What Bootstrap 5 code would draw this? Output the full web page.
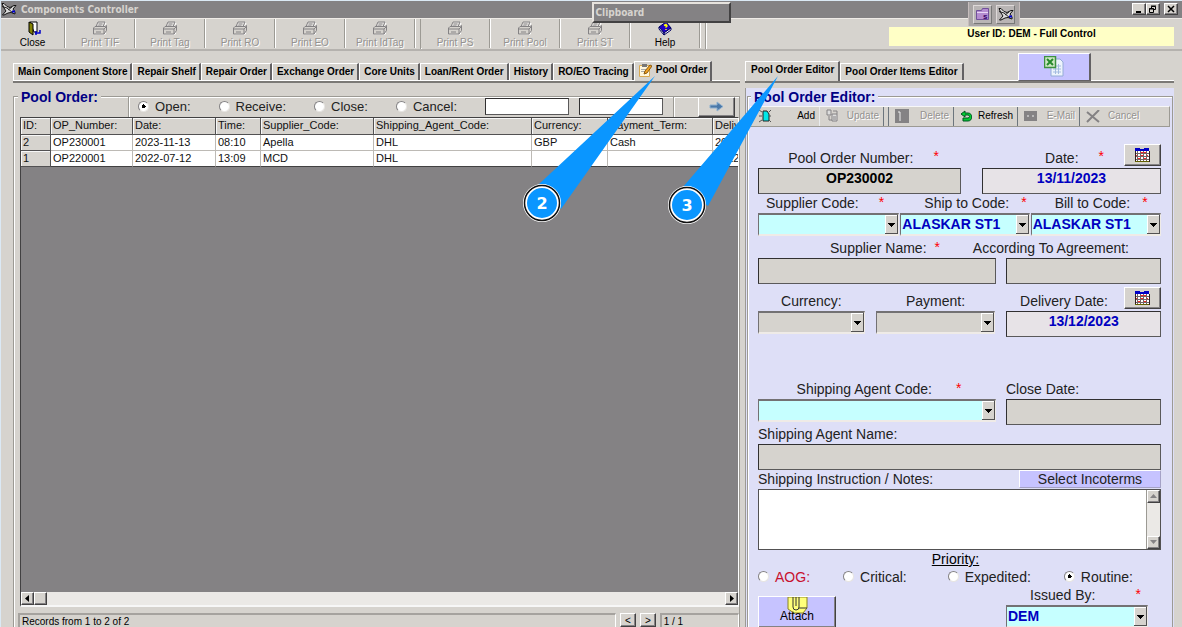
<!DOCTYPE html>
<html lang="en">
<head>
<meta charset="utf-8">
<meta name="viewport" content="width=device-width, initial-scale=1">
<title>Components Controller</title>
<link href="https://cdn.jsdelivr.net/npm/bootstrap@5.3.0/dist/css/bootstrap.min.css" rel="stylesheet">
<script src="https://cdn.jsdelivr.net/npm/bootstrap@5.3.0/dist/js/bootstrap.bundle.min.js"></script>
<style>
:root{--face:#d6d3ce;--dark:#848284;--panel:#dedff7;--cyan:#c6ffff;--lilac:#c6c3ff;--ink:#0000c0}
body{background:var(--face);color:#000;font:14px/18px "Liberation Sans",Arial,sans-serif;overflow:hidden}
button,input,select,textarea{border-radius:0;font:inherit;color:inherit}
button{padding:0;background:var(--face);border:0}
svg{display:block;flex:none}
.app{border-top:1px solid #dbe9f5;border-left:1px solid #dbe9f5}
.titlebar{background:var(--dark);color:var(--face);height:17px;padding:0 4px 0 0;font:bold 10px/15px "DejaVu Sans Condensed","DejaVu Sans",sans-serif}
.raised{border:1px solid;border-color:#fff #424142 #424142 #fff;box-shadow:inset -1px -1px var(--dark);background:var(--face)}
.winbtn{width:14px;height:12px;display:grid;place-items:center}
.toolbar{height:33px;border-bottom:2px solid #b5b2ae;border-top:1px solid #efebe7}
.tool{width:69px;border-right:1px solid #9c9a94;box-shadow:1px 0 #fff;margin-right:1px;font:10px/12px "Liberation Sans",sans-serif;white-space:nowrap;display:flex;flex-direction:column;align-items:center;gap:1px;padding-top:2px;margin-bottom:1px;flex:0 1 auto}
.tool.first{width:64px}
.twin{margin-right:5px}
.bar{width:1px;background:#9c9a94;box-shadow:1px 0 #fff}
.off{color:#949290;text-shadow:1px 1px #fff}
.user{background:#ffffc6;height:19px;width:285px;margin:8px 8px 0 auto;font:bold 10px/13px "Liberation Sans",sans-serif;text-align:center}
.clip{left:50%;top:1px;width:139px;height:21px;padding-left:2px;z-index:4;background:var(--dark);color:var(--face);border:2px solid;border-color:#e7e3de #424142 #424142 #e7e3de;font:bold 10px/17px "DejaVu Sans Condensed","DejaVu Sans",sans-serif}
.tray{right:162px;top:1px;width:52px;height:24px;z-index:4;background:#a9a5a5;border-left:1px solid #c6bdbd;border-right:1px solid #c6bdbd}
.tray button{width:19px;height:19px;background:#b9b5b5;border:1px solid;border-color:#ded9d9 #777 #777 #ded9d9;display:grid;place-items:center}
.halves{display:grid;grid-template-columns:minmax(0,63fr) minmax(0,37fr)}
.lefthalf{padding:0 5px 0 12px}
.righthalf{padding-right:8px}
.tabs{height:32px;align-items:flex-end;border-bottom:2px solid #7b7976;box-shadow:inset 0 -1px #fff;flex:none;flex-wrap:nowrap}
.tabs .tab{height:17px;margin-bottom:1px;padding:0 4px;border:1px solid;border-width:1px 1px 0;border-color:#fff #636163 #fff #fff;border-right-width:2px;font:bold 10px/15px "Liberation Sans",sans-serif;white-space:nowrap;display:flex;align-items:center}
.lefthalf .tab{padding:0 3px 0 4px}
.tabs .tab.active{height:20px;margin-bottom:0;padding-bottom:3px}
.lefthalf .tab.active{padding-left:3px}
.righthalf .tab.active{padding-left:5px}
.excel{width:73px;height:28px;background:var(--lilac);display:grid;place-items:center;margin-left:54px;border:1px solid;border-color:#fff #636163 #636163 #fff;border-right-width:2px}
.group{border:1px solid #9c9a94;border-bottom:0;box-shadow:inset 1px 1px #fff;margin-top:13px}
.grouphead{font:bold 14px/16px "Liberation Sans",sans-serif;color:#000084;background:var(--face);white-space:nowrap;margin:-8px 0 0;padding:0 3px}
input[type=radio]{appearance:none;width:11px;height:11px;border-radius:50%;background:#fff;border:1px solid;border-color:#848284 #e7e5e2 #e7e5e2 #848284;margin:0;flex:none}
input[type=radio]:checked{background:radial-gradient(circle,#000 2px,#fff 2px)}
.filters{height:20px;border-left:1px solid #fff;box-shadow:-1px 0 #9c9a94;font-size:13px}
.filters label{margin:0 28px 0 6px;color:#222}
.filters .find{margin-right:10px}
.box{border:1px solid #424142;border-color:#313031 #5a595a #5a595a #313031;background:#fff;min-width:0;width:100%;padding:0 2px;display:block}
.find{width:84px;height:17px}
.go{width:37px;height:20px;display:grid;place-items:center}
.gridbox{background:var(--dark);margin:0 0 0 6px;border:1px solid #424142;border-right:1px solid #fff;border-bottom:2px solid #f7f7f7;overflow:hidden;min-height:0}
.records{table-layout:fixed;width:780px;border-collapse:separate;border-spacing:0;font:11px/15px "Liberation Sans",sans-serif;white-space:nowrap;color:#111}
.records th,.records td{padding:0 2px;height:16px;border-right:1px solid #bdbab5;border-bottom:1px solid #bdbab5;background:#fff;font-weight:400;overflow:hidden}
.records thead th,.records tbody th{background:var(--face);border-color:#525152;box-shadow:inset 1px 1px #f7f7f7}
.records thead th{height:17px}
.records tr:last-child td{border-bottom-color:#424142}
.track{background:#ebe9e6}
.status{height:14px;margin:6px 0 0 4px;font:10px/13px "Liberation Sans",sans-serif}
.sunk{border:1px solid;border-width:2px 1px 0 2px;border-color:#a5a29e #fff #fff #a5a29e;padding-left:2px}
.pageno{width:11%}
.editor{background:var(--panel);margin-top:5px;padding:8px 1px 0;border-left:1px solid #9c9a94;overflow:hidden}
.editor .group{margin:0;border-color:#9c9a94}
.editor .grouphead{background:var(--panel);width:max-content;margin-left:3px}
.edbar{height:21px;margin:1px 2px 0;background:var(--face);border:1px solid;border-color:#f7f7f7 #9c9a94 #9c9a94 #f7f7f7;font:10px/18px "Liberation Sans",sans-serif;display:grid;grid-template-columns:68fr 64fr 6fr 64fr 64fr 62fr 90fr}
.edbar button{display:flex;align-items:center;justify-content:space-between;min-width:0;padding:0 4px 0 6px}
.form{padding:17px 11px 0 10px}
.fields{display:grid}
.fields>*{min-width:0}
.r1{grid-template-columns:203fr 179fr;column-gap:21px}
.r2{grid-template-columns:141fr 129fr 130fr;column-gap:1px}
.r3{grid-template-columns:238fr 155fr;column-gap:10px}
.r4{grid-template-columns:107fr 120fr 155fr;column-gap:11px}
.near{margin-top:3px}
.far{margin-top:43px}
.cap{display:flex;align-items:center;white-space:nowrap;height:19px;color:#222;gap:20px}
.tall{height:24px;padding-top:4px}
.star{color:#f00;line-height:16px;align-self:flex-start}
.val{height:26px;font-weight:700;text-align:center;padding-bottom:5px}
.grey{background:var(--face)}
.date{background:#e7e3e7;color:var(--ink)}
.pick{appearance:none;width:100%;height:23px;padding:0 1px;line-height:17px;font-weight:700;color:var(--ink);border:2px solid;border-color:#737173 #efebe7 #efebe7 #737173;border-width:2px 1px;background:var(--cyan) url("data:image/svg+xml,%3Csvg xmlns='http://www.w3.org/2000/svg' width='13' height='19' shape-rendering='crispEdges'%3E%3Cpath fill='%23d6d3ce' d='M0 0h13v19H0z'/%3E%3Cpath fill='none' stroke='%23fff' d='M.5 19V.5H13'/%3E%3Cpath fill='none' stroke='%23525152' d='M12.5 0v18.5H0'/%3E%3Cpath d='M3 8h7v1H9v1H8v1H7v1H6v-1H5v-1H4V9H3z'/%3E%3C/svg%3E") right center no-repeat}
.pick.grey{background-color:var(--face)}
.cal{width:37px;height:22px;display:grid;place-items:center;flex:none;align-self:flex-start}
.notes{height:61px;border:1px solid #525152}
.notes textarea{border:0;resize:none;outline:0}
.notes .track{width:14px;border-left:1px solid #9c9a94}
.arrowbtn{width:13px;height:13px;display:grid;place-items:center;flex:none}
.inco{width:142px;height:18px;background:var(--lilac);border:1px solid;border-color:#fff #a5a2c6 #a5a2c6 #fff;line-height:16px;color:#222}
.prio label{margin-left:6px;color:#222}
.prio .aog{color:#c8102e}
.attach{width:78px;height:32px;margin-top:10px;background:var(--lilac);font-size:12px;line-height:12px;display:flex;flex-direction:column;align-items:center}
.attach span{margin-top:-4px}
.issued{width:142px}
.callouts{left:0;top:0;z-index:5;pointer-events:none}
</style>
</head>
<body>
<svg width="0" height="0" class="position-absolute" aria-hidden="true">
  <symbol id="printer" viewBox="0 0 16 14"><g fill="none" stroke="#fff" transform="translate(1 1)"><path d="M4 5.500 6 .5h7l-2 5M1.500 6.500h11v5h-11z"/></g><path d="M4 5 6 .5h7L11 5" fill="#e7e5e2" stroke="#848284"/><path d="M6.500 2.500h4M5.500 4.500h4" stroke="#848284"/><path d="M1.500 6.500 3 5h10l1.500-1v5L12 12.500H1.500z" fill="#d6d3ce" stroke="#848284"/><path d="M1.500 7.500h10.500v5M4 10.500h5M12 7.500l2-2" stroke="#848284" fill="none"/></symbol>
  <symbol id="plane" viewBox="0 0 16 14"><path d="M1 1.500h2l3 3 3 1 4-2h2l-3 3.500 2 3v2l-4-1.500L7 11l-4 2H1.500L5 9 3 6z" fill="#ddd" stroke="#111"/><path d="m1 4.500 5 1.500 6 5M7 8l4-3" stroke="#222" fill="none"/><path d="M11 9.500h3" stroke="#00c" stroke-width="2"/></symbol>
  <symbol id="calendar" viewBox="0 0 15 14"><g shape-rendering="crispEdges"><path d="M0 0h14v13H0z" fill="#fff"/><path d="M0 0h14v3H0z" fill="#0000c6"/><path d="M5 0h4v1H5z" fill="#d6d3ce"/><path d="M0 5.500h14M0 8.500h14M0 11.500h14M2.500 3v10M5.500 3v10M8.500 3v10M11.500 3v10" stroke="#736464"/><path d="M6 4h2v1H6zM9 4h2v1H9zM0 7h2v1H0zM6 7h2v1H6zM12 7h1v1h-1zM3 10h2v1H3zM9 10h2v1H9z" fill="#f22"/><path d="M0 13.500h14" stroke="#636100"/><path d="M14.500 3v11M.5 3v10" stroke="#312021"/></g></symbol>
</svg>
<div class="app position-relative d-flex flex-column vh-100">
  <header class="titlebar d-flex align-items-center">
    <svg width="16" height="14"><use href="#plane"/></svg>
    <span class="ms-1">Components Controller</span>
    <div class="ms-auto d-flex">
      <button class="raised winbtn" aria-label="Minimize"><svg width="8" height="8"><path d="M1 7h5" stroke="#000" stroke-width="2"/></svg></button>
      <button class="raised winbtn" aria-label="Restore"><svg width="8" height="8"><path d="M2.500 3V1.500h4v3H5M2 1h5M.5 3.500h4v4h-4zM0 4h5" stroke="#000" fill="none"/></svg></button>
      <button class="raised winbtn ms-1" aria-label="Close window"><svg width="8" height="8"><path d="m1 1 6 6M7 1 1 7" stroke="#000" stroke-width="1.500"/></svg></button>
    </div>
  </header>
  <div class="clip position-absolute">Clipboard</div>
  <div class="tray position-absolute d-flex align-items-center justify-content-center gap-1">
    <button aria-label="Folder"><svg width="15" height="14"><path d="M1.500 3.500h5l1-2h6v11h-12z" fill="#b48cd0" stroke="#70509a"/><path d="M2 5.500h11" stroke="#e7d6f5"/><text x="8" y="12" font-size="8" font-weight="bold" fill="#306">s</text></svg></button>
    <button aria-label="Aircraft"><svg width="16" height="14"><use href="#plane"/></svg></button>
  </div>

  <div class="toolbar d-flex flex-shrink-0">
    <button class="tool first"><svg width="16" height="15"><path d="M5 1h7v10H9z" fill="#fff" stroke="#000"/><path d="m4 1 4 2v11l-4-3z" fill="#848200" stroke="#000"/><path d="M10 12h5v-3M11 10v4" stroke="#0000c6" stroke-width="1.500" fill="none"/></svg>Close</button>
    <button class="tool off" disabled><svg width="16" height="15"><use href="#printer"/></svg>Print TIF</button>
    <button class="tool off" disabled><svg width="16" height="15"><use href="#printer"/></svg>Print Tag</button>
    <button class="tool off" disabled><svg width="16" height="15"><use href="#printer"/></svg>Print RO</button>
    <button class="tool off" disabled><svg width="16" height="15"><use href="#printer"/></svg>Print EO</button>
    <button class="tool off twin" disabled><svg width="16" height="15"><use href="#printer"/></svg>Print IdTag</button><span class="bar"></span>
    <button class="tool off" disabled><svg width="16" height="15"><use href="#printer"/></svg>Print PS</button>
    <button class="tool off" disabled><svg width="16" height="15"><use href="#printer"/></svg>Print Pool</button>
    <button class="tool off" disabled><svg width="16" height="15"><use href="#printer"/></svg>Print ST</button>
    <button class="tool twin"><svg width="16" height="15"><path d="m2 6 7-5 5 6-7 5z" fill="#2100c6" stroke="#000063"/><path d="m2 6 5 6v2L2 8zM7 12l7-5v2l-7 5z" fill="#fff" stroke="#000063"/><path d="M7 4.500 9 3.500 10 5 8.500 6.500M9 8v1" stroke="#ff0" stroke-width="1.500" fill="none"/></svg>Help</button><span class="bar"></span>
    <div class="user">User ID: DEM - Full Control</div>
  </div>

  <main class="halves flex-grow-1 overflow-hidden">
    <section class="lefthalf d-flex flex-column overflow-hidden">
      <nav class="tabs nav">
        <button class="tab">Main Component Store</button>
        <button class="tab">Repair Shelf</button>
        <button class="tab">Repair Order</button>
        <button class="tab">Exchange Order</button>
        <button class="tab">Core Units</button>
        <button class="tab">Loan/Rent Order</button>
        <button class="tab">History</button>
        <button class="tab">RO/EO Tracing</button>
        <button class="tab active"><svg width="14" height="14" class="me-1"><path d="M1.500 2.500h10v11h-10z" fill="#fff6dc" stroke="#d8a850"/><path d="M4 1h5v3H4z" fill="#777"/><path d="M3 6.500h5M3 8.500h4" stroke="#aaa"/><path d="m6 11 1-3 5-6 2 1-5 7z" fill="#f0a020" stroke="#8a5a10"/></svg>Pool Order</button>
      </nav>
      <div class="group d-flex flex-column flex-grow-1">
        <div class="d-flex justify-content-between">
          <h2 class="grouphead ms-1">Pool Order:</h2>
          <form class="filters d-flex align-items-center">
            <input type="radio" name="state" id="open" class="ms-2" checked><label for="open">Open:</label>
            <input type="radio" name="state" id="receive"><label for="receive">Receive:</label>
            <input type="radio" name="state" id="closed"><label for="closed">Close:</label>
            <input type="radio" name="state" id="cancelled"><label for="cancelled">Cancel:</label>
            <input class="box find" aria-label="From"><input class="box find" aria-label="To">
            <span class="bar align-self-stretch me-4"></span>
            <button type="button" class="raised go me-1" aria-label="Go"><svg width="15" height="11"><path d="M1 4h7V1l6 4.500L8 10V7H1z" fill="#4b78a8" stroke="#8fb0cf"/></svg></button>
          </form>
        </div>
        <div class="gridbox d-flex flex-column flex-grow-1">
          <table class="records">
            <colgroup><col style="width:30px"><col style="width:82px"><col style="width:83px"><col style="width:45px"><col style="width:113px"><col style="width:158px"><col style="width:76px"><col style="width:105px"><col></colgroup>
            <thead><tr><th>ID:</th><th>OP_Number:</th><th>Date:</th><th>Time:</th><th>Supplier_Code:</th><th>Shipping_Agent_Code:</th><th>Currency:</th><th>Payment_Term:</th><th>Delivery_Date:</th></tr></thead>
            <tbody>
              <tr><th>2</th><td>OP230001</td><td>2023-11-13</td><td>08:10</td><td>Apella</td><td>DHL</td><td>GBP</td><td>Cash</td><td>2023-12-13</td></tr>
              <tr><th>1</th><td>OP220001</td><td>2022-07-12</td><td>13:09</td><td>MCD</td><td>DHL</td><td></td><td></td><td>2022-08-12</td></tr>
            </tbody>
          </table>
          <div class="track d-flex mt-auto">
            <button class="raised arrowbtn" aria-label="Scroll left"><svg width="5" height="7"><path d="M4 0v7L0 3.500z"/></svg></button>
            <button class="raised arrowbtn" aria-label="Scroll thumb"></button>
            <button class="raised arrowbtn ms-auto" aria-label="Scroll right"><svg width="5" height="7"><path d="M1 0v7l4-3.500z"/></svg></button>
          </div>
        </div>
        <footer class="status d-flex gap-1">
          <div class="sunk flex-grow-1">Records from 1 to 2 of 2</div>
          <button class="raised px-1">&lt;</button><button class="raised px-1">&gt;</button>
          <div class="sunk pageno">1 / 1</div>
        </footer>
      </div>
    </section>

    <section class="righthalf d-flex flex-column overflow-hidden">
      <nav class="tabs nav">
        <button class="tab active">Pool Order Editor</button>
        <button class="tab">Pool Order Items Editor</button>
        <button class="excel" aria-label="Export to Excel"><svg width="20" height="21"><path d="M7 3h9l3 3v14H7z" fill="#edf3fc" stroke="#94acd6"/><path d="M9 10h8M9 13h8M9 16h8M11.500 8v10M14.500 8v10" stroke="#a5bce0"/><path d="M.5.5h11v11H.5z" fill="#cfe8c4" stroke="#3d9140" stroke-width="1.500"/><path d="m3 3 6 6M9 3 3 9" stroke="#278a2c" stroke-width="2"/></svg></button>
      </nav>
      <div class="editor flex-grow-1">
        <div class="group">
          <h2 class="grouphead">Pool Order Editor:</h2>
          <div class="edbar">
            <button class="ps-2"><svg width="13" height="14"><path d="M4 2h4l2 3v7H4z" fill="#00e7e7" stroke="#222"/><path d="m0 1 3 2M12 1l-2 2M0 7h3M0 13l3-2M12 13l-2-2M12 7h-2" stroke="#555"/></svg>Add</button>
            <button class="off border-start border-secondary-subtle" disabled><svg width="13" height="14"><path d="M1 1h4v5H1zM6 5h5v7H6z" fill="#ddd" stroke="#848284"/><path d="M7 2h4v3M3 7v4h3M7 8h3M7 10h3" stroke="#848284" fill="none"/></svg>Update</button>
            <span class="border-start border-end border-secondary"></span>
            <button class="off" disabled><svg width="14" height="14"><path d="M0 0h14v14H0z" fill="#848284"/><path d="M3 3h2v9" stroke="#eee" fill="none"/></svg>Delete</button>
            <button class="border-start border-secondary"><svg width="12" height="13"><path d="M5 1 1 4l4 3V5h3c2 0 2 3 0 3H3v3h5c5 0 5-8 0-8H5z" fill="#0c3" stroke="#052"/></svg>Refresh</button>
            <button class="off border-start border-secondary" disabled><svg width="13" height="10"><path d="M0 0h13v10H0z" fill="#848284"/><path d="M3 5h2M8 5h2" stroke="#eee"/></svg>E-Mail</button>
            <button class="off border-start border-secondary justify-content-start gap-2" disabled><svg width="14" height="13"><path d="m1 2 12 10M13 0 1 12" stroke="#848284" stroke-width="2"/></svg>Cancel</button>
          </div>
          <form class="form">
            <div class="fields r1">
              <div><div class="cap tall justify-content-center ps-2"><label for="num">Pool Order Number:</label><span class="star">*</span></div><input id="num" class="box val grey" value="OP230002" readonly></div>
              <div><div class="cap tall justify-content-end pt-0"><label for="date" class="pt-1">Date:</label><span class="star pt-1">*</span><button type="button" class="raised cal" aria-label="Pick date"><svg width="15" height="14"><use href="#calendar"/></svg></button></div><input id="date" class="box val date" value="13/11/2023"></div>
            </div>
            <div class="fields r2">
              <div><div class="cap ps-2"><label for="sup">Supplier Code:</label><span class="star">*</span></div><select id="sup" class="pick"><option></option></select></div>
              <div><div class="cap ps-4 gap-2"><label for="ship">Ship to Code:</label><span class="star ps-1">*</span></div><select id="ship" class="pick"><option>ALASKAR ST1</option></select></div>
              <div><div class="cap ps-4 gap-2"><label for="bill">Bill to Code:</label><span class="star ps-1">*</span></div><select id="bill" class="pick"><option>ALASKAR ST1</option></select></div>
            </div>
            <div class="fields r3 near">
              <div><div class="cap justify-content-center ps-3 gap-2"><label for="sname">Supplier Name:</label><span class="star">*</span></div><input id="sname" class="box val grey"></div>
              <div><div class="cap justify-content-end pe-4"><label for="agr" class="pe-2">According To Agreement:</label></div><input id="agr" class="box val grey"></div>
            </div>
            <div class="fields r4 near">
              <div><div class="cap tall justify-content-center"><label for="cur">Currency:</label></div><select id="cur" class="pick grey"><option></option></select></div>
              <div><div class="cap tall justify-content-center"><label for="pay">Payment:</label></div><select id="pay" class="pick grey"><option></option></select></div>
              <div><div class="cap tall justify-content-end gap-3 pt-0"><label for="ddate" class="pt-1">Delivery Date:</label><button type="button" class="raised cal" aria-label="Pick delivery date"><svg width="15" height="14"><use href="#calendar"/></svg></button></div><input id="ddate" class="box val date" value="13/12/2023"></div>
            </div>
            <div class="fields r3 far">
              <div><div class="cap justify-content-center ps-1 gap-4"><label for="agent">Shipping Agent Code:</label><span class="star">*</span></div><select id="agent" class="pick"><option></option></select></div>
              <div><div class="cap"><label for="cdate">Close Date:</label></div><input id="cdate" class="box val grey"></div>
            </div>
            <div class="cap"><label for="aname">Shipping Agent Name:</label></div><input id="aname" class="box val grey">
            <div class="cap justify-content-between"><label for="notes">Shipping Instruction / Notes:</label><button type="button" class="inco">Select Incoterms</button></div>
            <div class="notes d-flex"><textarea id="notes" class="flex-grow-1"></textarea><div class="track d-flex flex-column justify-content-between"><button type="button" class="raised arrowbtn" aria-label="Scroll up"><svg width="7" height="4"><path d="M0 4h7L3.500 0z" fill="#848284"/></svg></button><button type="button" class="raised arrowbtn" aria-label="Scroll down"><svg width="7" height="4"><path d="M0 0h7L3.500 4z" fill="#848284"/></svg></button></div></div>
            <div class="text-center text-decoration-underline pe-2">Priority:</div>
            <div class="prio d-flex align-items-center justify-content-between pe-4">
              <span class="d-flex align-items-center"><input type="radio" name="prio" id="aog"><label for="aog" class="aog">AOG:</label></span>
              <span class="d-flex align-items-center"><input type="radio" name="prio" id="crit"><label for="crit">Critical:</label></span>
              <span class="d-flex align-items-center ps-2"><input type="radio" name="prio" id="exped"><label for="exped">Expedited:</label></span>
              <span class="d-flex align-items-center pe-1"><input type="radio" name="prio" id="rout" checked><label for="rout">Routine:</label></span>
            </div>
            <div class="fields r3">
              <div><button type="button" class="raised attach"><svg width="21" height="17"><path d="M1 0h19v11l-4 5H7L1 12z" fill="#ffff7b" stroke="#8a8420"/><path d="M6 0v10q0 3 3 3t3-3V0M9 0v9M12 11h8" stroke="#333" fill="none"/></svg><span>Attach</span></button></div>
              <div><div class="cap ps-4 justify-content-between pe-3"><label for="issued">Issued By:</label><span class="star pe-1">*</span></div><select id="issued" class="pick issued"><option>DEM</option></select></div>
            </div>
          </form>
        </div>
      </div>
    </section>
  </main>

  <svg class="callouts position-absolute" width="800" height="230" font-family="DejaVu Sans, sans-serif" font-weight="bold" font-size="16" text-anchor="middle">
    <path d="M654 75 537 184l23 24zM777 75 682 186l25 19z" fill="#0a96ff"/>
    <g fill="#0a96ff" stroke="#fff" stroke-width="4"><circle cx="541" cy="202" r="17"/><circle cx="686" cy="204" r="17"/></g>
    <g fill="none" stroke="#111" stroke-width="1.500"><circle cx="541" cy="202" r="17.500"/><circle cx="686" cy="204" r="17.500"/></g>
    <g fill="#fff"><text x="541" y="208">2</text><text x="686" y="210">3</text></g>
  </svg>
</div>
</body>
</html>
